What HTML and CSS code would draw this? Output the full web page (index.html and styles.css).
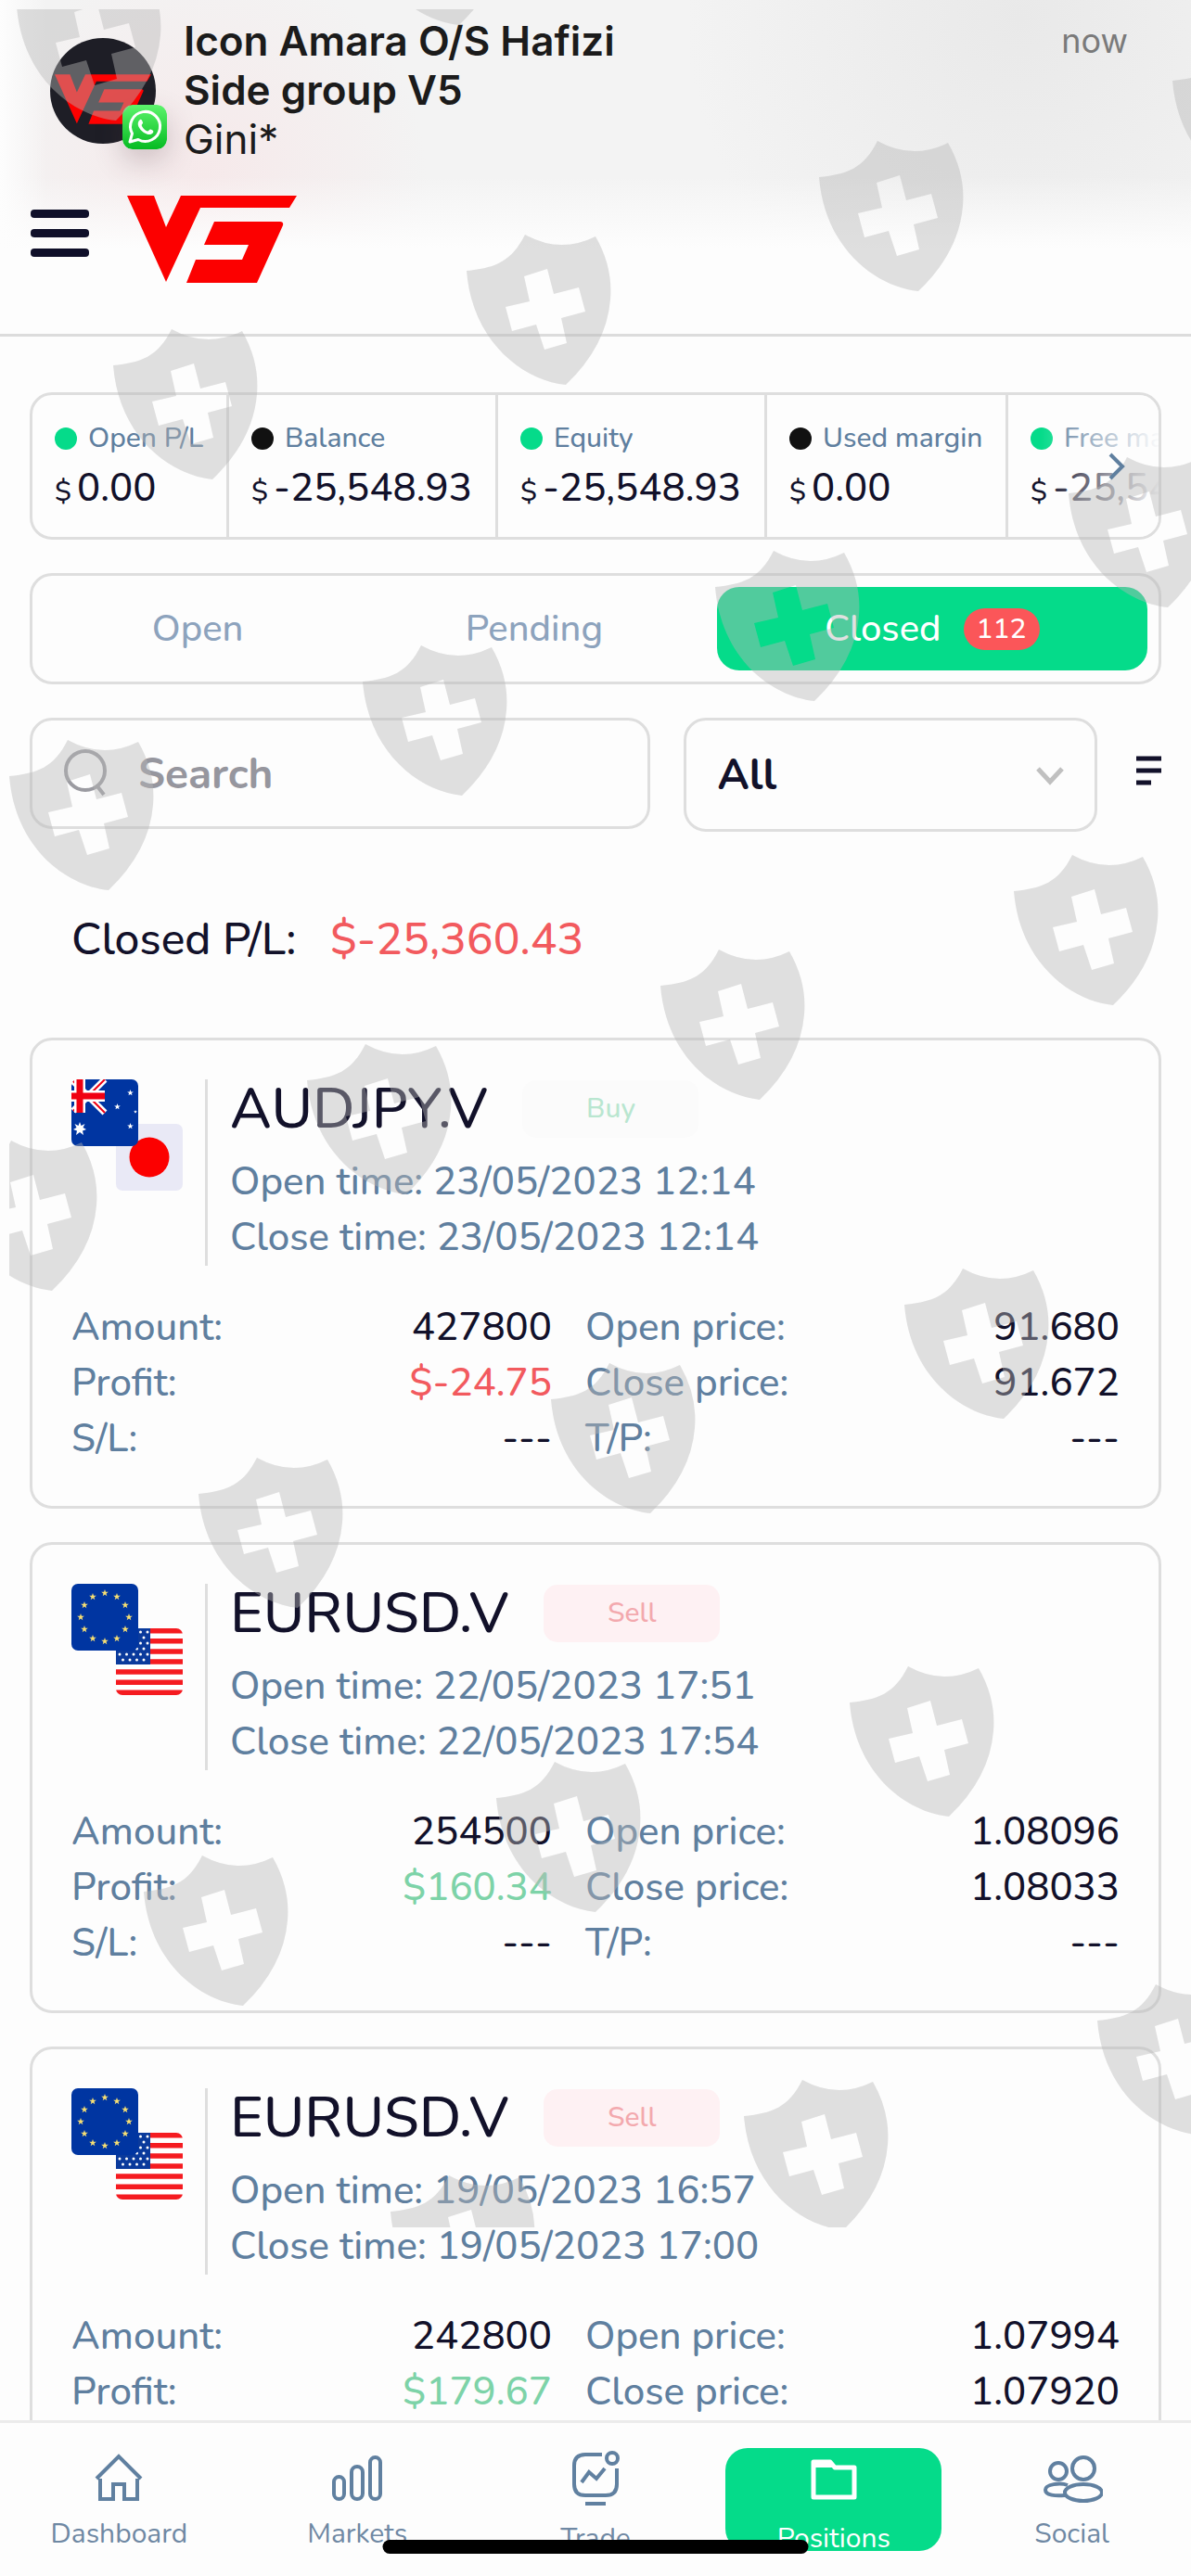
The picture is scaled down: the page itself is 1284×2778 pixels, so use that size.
FILE: index.html
```html
<!DOCTYPE html>
<html lang="en">
<head>
    <meta charset="UTF-8">
    <meta name="viewport" content="width=device-width, initial-scale=1.0">
    <title>Positions</title>
    <link rel="stylesheet" href="styles.css">
</head>
<body>

    <!-- shared shapes -->
    <svg class="defs" aria-hidden="true">
        <symbol id="v5" viewBox="0 0 183 94">
            <path d="M0 0H29L42 34L58 0H183L175 13H79L42 93Z"/>
            <path d="M94 28H165Q169 28 168 32L140 94H64L74 69H124L131 53H83Z"/>
        </symbol>
        <symbol id="shield" viewBox="0 0 156 163">
            <path fill-rule="evenodd" d="M63 0Q101 21 139 2Q158 35 155 70Q151 120 107 162C60 157 6 115 0 39C30 36 48 30 63 0ZM62 45L68 72L42 78L49 104L75 97L84 124L108 117L102 90L128 83L121 57L94 64L87 37Z"/>
        </symbol>
        <symbol id="star5" viewBox="-5 -5 10 10">
            <path d="M0-5L1.2-1.6L4.8-1.5L1.9.6L2.9 4L0 2L-2.9 4L-1.9.6L-4.8-1.5L-1.2-1.6Z"/>
        </symbol>
        <symbol id="flag-au" viewBox="0 0 72 72">
            <rect width="72" height="72" rx="7" fill="#0035a1"/>
            <path d="M2 2L36 36M36 0L2 34" stroke="#fff" stroke-width="7"/>
            <path d="M2 2L36 36M36 0L2 34" stroke="#f00012" stroke-width="2"/>
            <path d="M9 0V36M0 18H36" stroke="#fff" stroke-width="12"/>
            <path d="M9 0V36M0 18H36" stroke="#f00012" stroke-width="7"/>
            <g fill="#fff">
                <path d="M9 46L10.500 50L14.500 48L12.500 52L16 54L12 55.500L13 60L9 57L5 60L6 55.500L2 54L5.500 52L3.500 48L7.500 50Z"/>
                <use href="#star5" x="60" y="11" width="7" height="7"/>
                <use href="#star5" x="46" y="26" width="7" height="7"/>
                <use href="#star5" x="60" y="47" width="7" height="7"/>
                <use href="#star5" x="67" y="33" width="4" height="4"/>
            </g>
        </symbol>
        <symbol id="flag-jp" viewBox="0 0 72 72">
            <rect width="72" height="72" rx="7" fill="#e9e9f6"/>
            <circle cx="36" cy="36" r="21.500" fill="#fc0000"/>
        </symbol>
        <symbol id="flag-eu" viewBox="0 0 72 72">
            <rect width="72" height="72" rx="7" fill="#0035a1"/>
            <g fill="#f8e072">
                <use href="#star5" x="32" y="6" width="8" height="8"/>
                <use href="#star5" x="45" y="10" width="8" height="8"/>
                <use href="#star5" x="54" y="19" width="8" height="8"/>
                <use href="#star5" x="58" y="32" width="8" height="8"/>
                <use href="#star5" x="54" y="45" width="8" height="8"/>
                <use href="#star5" x="45" y="55" width="8" height="8"/>
                <use href="#star5" x="32" y="58" width="8" height="8"/>
                <use href="#star5" x="19" y="55" width="8" height="8"/>
                <use href="#star5" x="10" y="45" width="8" height="8"/>
                <use href="#star5" x="6" y="32" width="8" height="8"/>
                <use href="#star5" x="10" y="19" width="8" height="8"/>
                <use href="#star5" x="19" y="10" width="8" height="8"/>
            </g>
        </symbol>
        <symbol id="flag-us" viewBox="0 0 72 72">
            <clipPath id="us-clip"><rect width="72" height="72" rx="7"/></clipPath>
            <g clip-path="url(#us-clip)">
                <rect width="72" height="72" fill="#fff"/>
                <path d="M0 2.800H72M0 13.800H72M0 25H72M0 36H72M0 47H72M0 58.200H72M0 69.300H72" stroke="#f51b20" stroke-width="5.600"/>
                <rect width="37" height="39" fill="#0a3a9c"/>
                <path d="M4 4H36M4 16H36M4 28H36" stroke="#fff" stroke-width="3" stroke-linecap="round" stroke-dasharray="0 7.500"/>
                <path d="M7.500 10H36M7.500 22H36M7.500 34H36" stroke="#fff" stroke-width="3" stroke-linecap="round" stroke-dasharray="0 7.500"/>
            </g>
        </symbol>
    </svg>

    <div class="top">
        <section class="notification">
            <div class="avatar">
                <svg class="avatar-logo"><use href="#v5"/></svg>
                <svg class="whatsapp" viewBox="0 0 48 48">
                    <defs>
                        <linearGradient id="wa" x1="0" y1="0" x2="0" y2="1">
                            <stop offset="0" stop-color="#5cf46c"/>
                            <stop offset="1" stop-color="#06bb22"/>
                        </linearGradient>
                    </defs>
                    <rect width="48" height="48" rx="11" fill="url(#wa)"/>
                    <path d="M8 40L10.500 31A16 16 0 1 1 17 37.500Z" fill="none" stroke="#fff" stroke-width="3" stroke-linejoin="round"/>
                    <path d="M19 16C20 15 21 16 22 19C22.500 20.500 20 21 21 23C22.500 26 24.500 27.500 27 28.500C28.500 28.500 29 26 30.500 26.500C33 27.500 34 28.500 33 30C31 33 27 32.500 23 30C18 26.500 14 20 19 16Z" fill="#fff"/>
                </svg>
            </div>
            <div class="message">
                <strong>Icon Amara O/S Hafizi<br>Side group V5</strong>
                <p>Gini*</p>
            </div>
            <span class="time">now</span>
        </section>

        <header>
            <button class="menu" type="button" aria-label="Menu">
                <span></span><span></span><span></span>
            </button>
            <a href="#" class="logo" aria-label="V5"><svg><use href="#v5"/></svg></a>
        </header>
    </div>

    <main>
        <section class="stats">
            <div class="stat">
                <h4 class="up">Open P/L</h4>
                <p><small>$</small>0.00</p>
            </div>
            <div class="stat">
                <h4>Balance</h4>
                <p><small>$</small>-25,548.93</p>
            </div>
            <div class="stat">
                <h4 class="up">Equity</h4>
                <p><small>$</small>-25,548.93</p>
            </div>
            <div class="stat">
                <h4>Used margin</h4>
                <p><small>$</small>0.00</p>
            </div>
            <div class="stat">
                <h4 class="up">Free margin</h4>
                <p><small>$</small>-25,548.93</p>
            </div>
            <button class="next" type="button" aria-label="More">
                <svg viewBox="0 0 20 30"><path d="M3 2L16 15L3 28" fill="none" stroke="#5f7f9f" stroke-width="4"/></svg>
            </button>
        </section>

        <nav class="tabs">
            <button type="button">Open</button>
            <button type="button">Pending</button>
            <button type="button" class="active">Closed <span class="count">112</span></button>
        </nav>

        <form class="filters">
            <label class="search">
                <svg viewBox="0 0 50 56"><circle cx="25" cy="25" r="21" fill="none" stroke="#9b9ba1" stroke-width="4"/><path d="M38 42L45 51" stroke="#9b9ba1" stroke-width="4"/></svg>
                <input type="text" placeholder="Search" aria-label="Search">
            </label>
            <div class="picker">
                <select aria-label="Symbol">
                    <option>All</option>
                </select>
                <svg viewBox="0 0 30 20"><path d="M2 2L15 16L28 2" fill="none" stroke="#c0c0c0" stroke-width="5"/></svg>
            </div>
            <button class="sort" type="button" aria-label="Sort">
                <svg viewBox="0 0 27 32"><path d="M0 3H27M0 16H27M0 29H16" stroke="#12112a" stroke-width="5"/></svg>
            </button>
        </form>

        <p class="summary">Closed P/L: <span class="loss">$-25,360.43</span></p>

        <article class="card">
            <div class="card-head">
                <div class="flags">
                    <svg><use href="#flag-jp"/></svg>
                    <svg class="front"><use href="#flag-au"/></svg>
                </div>
                <div class="info">
                    <h2>AUDJPY.V <span class="side buy">Buy</span></h2>
                    <p>Open time: 23/05/2023 12:14</p>
                    <p>Close time: 23/05/2023 12:14</p>
                </div>
            </div>
            <dl>
                <div><dt>Amount:</dt><dd>427800</dd></div>
                <div><dt>Open price:</dt><dd>91.680</dd></div>
                <div><dt>Profit:</dt><dd class="loss">$-24.75</dd></div>
                <div><dt>Close price:</dt><dd>91.672</dd></div>
                <div><dt>S/L:</dt><dd>---</dd></div>
                <div><dt>T/P:</dt><dd>---</dd></div>
            </dl>
        </article>

        <article class="card">
            <div class="card-head">
                <div class="flags">
                    <svg><use href="#flag-us"/></svg>
                    <svg class="front"><use href="#flag-eu"/></svg>
                </div>
                <div class="info">
                    <h2>EURUSD.V <span class="side sell">Sell</span></h2>
                    <p>Open time: 22/05/2023 17:51</p>
                    <p>Close time: 22/05/2023 17:54</p>
                </div>
            </div>
            <dl>
                <div><dt>Amount:</dt><dd>254500</dd></div>
                <div><dt>Open price:</dt><dd>1.08096</dd></div>
                <div><dt>Profit:</dt><dd class="gain">$160.34</dd></div>
                <div><dt>Close price:</dt><dd>1.08033</dd></div>
                <div><dt>S/L:</dt><dd>---</dd></div>
                <div><dt>T/P:</dt><dd>---</dd></div>
            </dl>
        </article>

        <article class="card">
            <div class="card-head">
                <div class="flags">
                    <svg><use href="#flag-us"/></svg>
                    <svg class="front"><use href="#flag-eu"/></svg>
                </div>
                <div class="info">
                    <h2>EURUSD.V <span class="side sell">Sell</span></h2>
                    <p>Open time: 19/05/2023 16:57</p>
                    <p>Close time: 19/05/2023 17:00</p>
                </div>
            </div>
            <dl>
                <div><dt>Amount:</dt><dd>242800</dd></div>
                <div><dt>Open price:</dt><dd>1.07994</dd></div>
                <div><dt>Profit:</dt><dd class="gain">$179.67</dd></div>
                <div><dt>Close price:</dt><dd>1.07920</dd></div>
            </dl>
        </article>
    </main>

    <!-- watermark over the page -->
    <svg class="watermark" aria-hidden="true">
        <g transform="translate(-10 -10)">
            <use href="#shield" x="18" y="-32" width="156" height="163"/>
            <use href="#shield" x="388" y="-135" width="156" height="163"/>
            <use href="#shield" x="1264" y="48" width="156" height="163"/>
            <use href="#shield" x="883" y="152" width="156" height="163"/>
            <use href="#shield" x="503" y="253" width="156" height="163"/>
            <use href="#shield" x="122" y="355" width="156" height="163"/>
            <use href="#shield" x="1152" y="493" width="156" height="163"/>
            <use href="#shield" x="771" y="594" width="156" height="163"/>
            <use href="#shield" x="391" y="696" width="156" height="163"/>
            <use href="#shield" x="10" y="798" width="156" height="163"/>
            <use href="#shield" x="1093" y="922" width="156" height="163"/>
            <use href="#shield" x="712" y="1024" width="156" height="163"/>
            <use href="#shield" x="331" y="1126" width="156" height="163"/>
            <use href="#shield" x="-51" y="1230" width="156" height="163"/>
            <use href="#shield" x="975" y="1368" width="156" height="163"/>
            <use href="#shield" x="594" y="1470" width="156" height="163"/>
            <use href="#shield" x="214" y="1572" width="156" height="163"/>
            <use href="#shield" x="916" y="1797" width="156" height="163"/>
            <use href="#shield" x="535" y="1900" width="156" height="163"/>
            <use href="#shield" x="155" y="2001" width="156" height="163"/>
            <use href="#shield" x="1183" y="2140" width="156" height="163"/>
            <use href="#shield" x="802" y="2243" width="156" height="163"/>
            <use href="#shield" x="421" y="2346" width="156" height="163"/>
        </g>
    </svg>

    <nav class="tabbar">
        <a href="#">
            <svg viewBox="0 0 60 60"><path d="M6 30L30 6L54 30M10 30V52H24V36H36V52H50V30"/></svg>
            Dashboard
        </a>
        <a href="#">
            <svg viewBox="0 0 60 60"><rect x="5" y="28" width="11" height="24" rx="5.500"/><rect x="24" y="17" width="12" height="35" rx="6"/><rect x="44" y="7" width="11" height="45" rx="5.500"/></svg>
            Markets
        </a>
        <a href="#" class="low">
            <svg viewBox="0 0 60 60"><path d="M37 4H19Q7 4 7 16V36Q7 48 19 48H41Q53 48 53 36V19M15 34L23 23L31 30L40 19M19 57H41"/><circle cx="48" cy="8" r="6"/></svg>
            Trade
        </a>
        <a href="#" class="low current">
            <svg viewBox="0 0 60 60"><path d="M8 12H26L31 18H52V50H8Z" stroke-width="5" stroke-linejoin="round"/><path d="M8 15H28" stroke-width="6"/></svg>
            Positions
        </a>
        <a href="#">
            <svg viewBox="0 0 66 60"><circle cx="18" cy="22" r="9"/><circle cx="45" cy="19" r="12"/><path d="M28 37C20 34 4 36 4 42C4 48 15 49 25 48"/><ellipse cx="45" cy="45" rx="20" ry="9"/></svg>
            Social
        </a>
        <span class="home-indicator"></span>
    </nav>

</body>
</html>
```
FILE: styles.css
```css
* {
    box-sizing: border-box;
}

body {
    position: relative;
    margin: 0;
    font-family: Nunito, 'Noto Sans', sans-serif;
    font-weight: 500;
    color: #12112a;
    background-color: #fdfdfd;
}

h2,
h4,
p,
dl,
dd {
    margin: 0;
    font-weight: 500;
}

button {
    font: inherit;
    color: inherit;
    background: none;
    border: none;
    padding: 0;
    cursor: pointer;
}

a {
    text-decoration: none;
}

svg {
    display: block;
}

.defs {
    position: absolute;
    width: 0;
    height: 0;
}

/* Notification and header */
.top {
    background:
        linear-gradient(to right, #fdfdfd, rgba(253, 253, 253, 0) 50px),
        linear-gradient(to bottom, rgba(253, 253, 253, 0) 190px, #fdfdfd 268px),
        radial-gradient(circle 240px at 220px 190px, #f6e9ea, rgba(246, 233, 234, 0)),
        radial-gradient(circle 360px at 1100px 20px, #e9e9e9, rgba(233, 233, 233, 0)),
        #f3f3f3;
    border-bottom: 3px solid #dcdcdc;
}

.notification {
    display: flex;
    gap: 30px;
    padding: 18px 68px 23px 54px;
    font-family: Inter, sans-serif;
    font-size: 44px;
    line-height: 53px;
    color: #1b1b1b;
}

.avatar {
    position: relative;
    width: 114px;
    height: 114px;
    margin-top: 23px;
    border-radius: 50%;
    background-color: #1e1e26;
}

.avatar-logo {
    width: 104px;
    height: 58px;
    margin: 37px 5px;
    fill: #ff0000;
}

.whatsapp {
    position: absolute;
    right: -12px;
    bottom: -6px;
    width: 48px;
    height: 48px;
    border-radius: 11px;
    box-shadow: 0 12px 30px rgba(90, 60, 70, 0.25);
}

.message {
    flex: 1;
    font-weight: 400;
}

.message strong {
    font-weight: 600;
}

.message p {
    font-weight: 400;
}

.time {
    font-size: 36px;
    font-weight: 400;
    color: #7a7a7a;
}

header {
    display: flex;
    align-items: center;
    gap: 41px;
    height: 160px;
    padding: 0 33px 44px;
}

.menu {
    display: flex;
    flex-direction: column;
    gap: 12px;
    width: 63px;
    margin-bottom: 14px;
}

.menu span {
    height: 9px;
    border-radius: 4px;
    background-color: #0f0f29;
}

.logo svg {
    width: 183px;
    height: 94px;
    fill: #fc0000;
}

main {
    padding: 60px 32px 0;
}

/* Account figures */
.stats {
    position: relative;
    display: grid;
    grid-template-columns: 212px 290px 290px 260px 320px;
    overflow: hidden;
    border: 3px solid #dedede;
    border-radius: 24px;
    margin-bottom: 36px;
}

.stats::after {
    content: '';
    position: absolute;
    inset: -3px -3px -3px auto;
    width: 130px;
    background: linear-gradient(to right, rgba(253, 253, 253, 0), #fdfdfd);
}

.stat {
    padding: 26px 0 19px 24px;
    border-right: 3px solid #dedede;
    white-space: nowrap;
}

.stat h4 {
    display: flex;
    align-items: center;
    gap: 12px;
    font-size: 30px;
    line-height: 42px;
    color: #5f7f9f;
}

.stat h4::before {
    content: '';
    width: 24px;
    height: 24px;
    border-radius: 50%;
    background-color: #111;
}

.stat h4.up::before {
    background-color: #05db8a;
}

.stat p {
    font-size: 42px;
    line-height: 66px;
}

.stat small {
    margin-right: 6px;
    font-size: 30px;
    line-height: 1;
}

.next {
    position: absolute;
    z-index: 1;
    right: 35px;
    top: 62px;
}

.next svg {
    width: 20px;
    height: 30px;
}

/* Open / pending / closed */
.tabs {
    display: grid;
    grid-template-columns: 332fr 393fr 464fr;
    padding: 12px;
    border: 3px solid #dedede;
    border-radius: 24px;
    margin-bottom: 36px;
}

.tabs button {
    display: flex;
    align-items: center;
    justify-content: center;
    gap: 24px;
    height: 90px;
    border-radius: 24px;
    font-size: 40px;
    color: #8da3bd;
}

.tabs .active {
    color: #fff;
    background-color: #05db8a;
}

.count {
    padding: 0 14px;
    border-radius: 23px;
    font-size: 30px;
    line-height: 45px;
    background-color: #fb5659;
}

/* Search row */
.filters {
    display: grid;
    grid-template-columns: 668fr 446fr auto;
    align-items: start;
    gap: 36px;
}

.search {
    display: flex;
    align-items: center;
    gap: 32px;
    height: 120px;
    padding: 0 32px;
    border: 3px solid #dedede;
    border-radius: 24px;
}

.search svg {
    flex: none;
    width: 50px;
    height: 56px;
}

.search input {
    width: 100%;
    min-width: 0;
    padding: 0;
    border: none;
    outline: none;
    font: inherit;
    font-size: 46px;
    font-weight: 700;
    background: none;
}

.search input::placeholder {
    color: #96969e;
}

.picker {
    position: relative;
}

.picker select {
    width: 100%;
    height: 123px;
    padding: 0 34px;
    border: 3px solid #dedede;
    border-radius: 24px;
    appearance: none;
    font: inherit;
    font-size: 46px;
    font-weight: 700;
    color: inherit;
    background: none;
}

.picker svg {
    position: absolute;
    right: 36px;
    top: 53px;
    width: 30px;
    height: 20px;
}

.sort {
    margin: 41px 0 0 6px;
}

.sort svg {
    width: 27px;
    height: 32px;
}

.summary {
    padding: 84px 45px 74px;
    font-size: 48px;
    line-height: 64px;
}

.summary span {
    margin-left: 24px;
}

.loss {
    color: #f25a5e;
}

.gain {
    color: #7dd3a8;
}

/* Closed positions */
.card {
    padding: 42px;
    border: 3px solid #dedede;
    border-radius: 24px;
    margin-bottom: 36px;
    font-size: 42px;
    line-height: 60px;
}

.card-head {
    display: flex;
    gap: 24px;
    margin-bottom: 37px;
    color: #5f7f9f;
}

.flags {
    position: relative;
    width: 120px;
    height: 120px;
}

.flags svg {
    width: 72px;
    height: 72px;
    margin: 48px 0 0 48px;
}

.flags .front {
    position: absolute;
    left: 0;
    top: 0;
    margin: 0;
}

.info {
    padding-left: 24px;
    border-left: 3px solid #dedede;
}

.info h2 {
    display: flex;
    align-items: center;
    gap: 38px;
    margin-bottom: 17px;
    font-size: 61px;
    line-height: 64px;
    color: #12112a;
}

.side {
    width: 190px;
    border-radius: 15px;
    font-size: 30px;
    line-height: 62px;
    text-align: center;
}

.buy {
    color: #b9e6d0;
    background-color: #fbfbfb;
}

.sell {
    color: #f3a9ae;
    background-color: #fef1f3;
}

dl {
    display: grid;
    grid-template-columns: 518fr 576fr;
    column-gap: 36px;
}

dl div {
    display: flex;
    justify-content: space-between;
}

dt {
    color: #5f7f9f;
}

.watermark {
    position: absolute;
    left: 10px;
    top: 10px;
    width: calc(100% - 10px);
    height: 2392px;
    fill: rgba(184, 184, 184, 0.43);
    pointer-events: none;
}

/* Bottom navigation */
.tabbar {
    position: fixed;
    left: 0;
    right: 0;
    bottom: 0;
    display: grid;
    grid-template-columns: repeat(5, 1fr);
    align-items: start;
    padding: 27px 0;
    border-top: 3px solid #ebebeb;
    background-color: #fdfdfd;
}

.tabbar a {
    display: flex;
    flex-direction: column;
    align-items: center;
    height: 111px;
    margin: 0 12px;
    padding-top: 3px;
    border-radius: 24px;
    font-size: 30px;
    font-weight: 400;
    line-height: 38px;
    color: #6f88a3;
}

.tabbar svg {
    flex: none;
    height: 60px;
    margin-bottom: 11px;
    fill: none;
    stroke: #6080a0;
    stroke-width: 4px;
}

.tabbar .low svg {
    margin-bottom: 16px;
}

.tabbar .current {
    color: #fff;
    background-color: #05db8a;
}

.tabbar .current svg {
    stroke: #fff;
}

.home-indicator {
    position: absolute;
    left: 50%;
    bottom: 24px;
    width: 459px;
    height: 15px;
    border-radius: 8px;
    background-color: #000;
    transform: translateX(-50%);
}
```
